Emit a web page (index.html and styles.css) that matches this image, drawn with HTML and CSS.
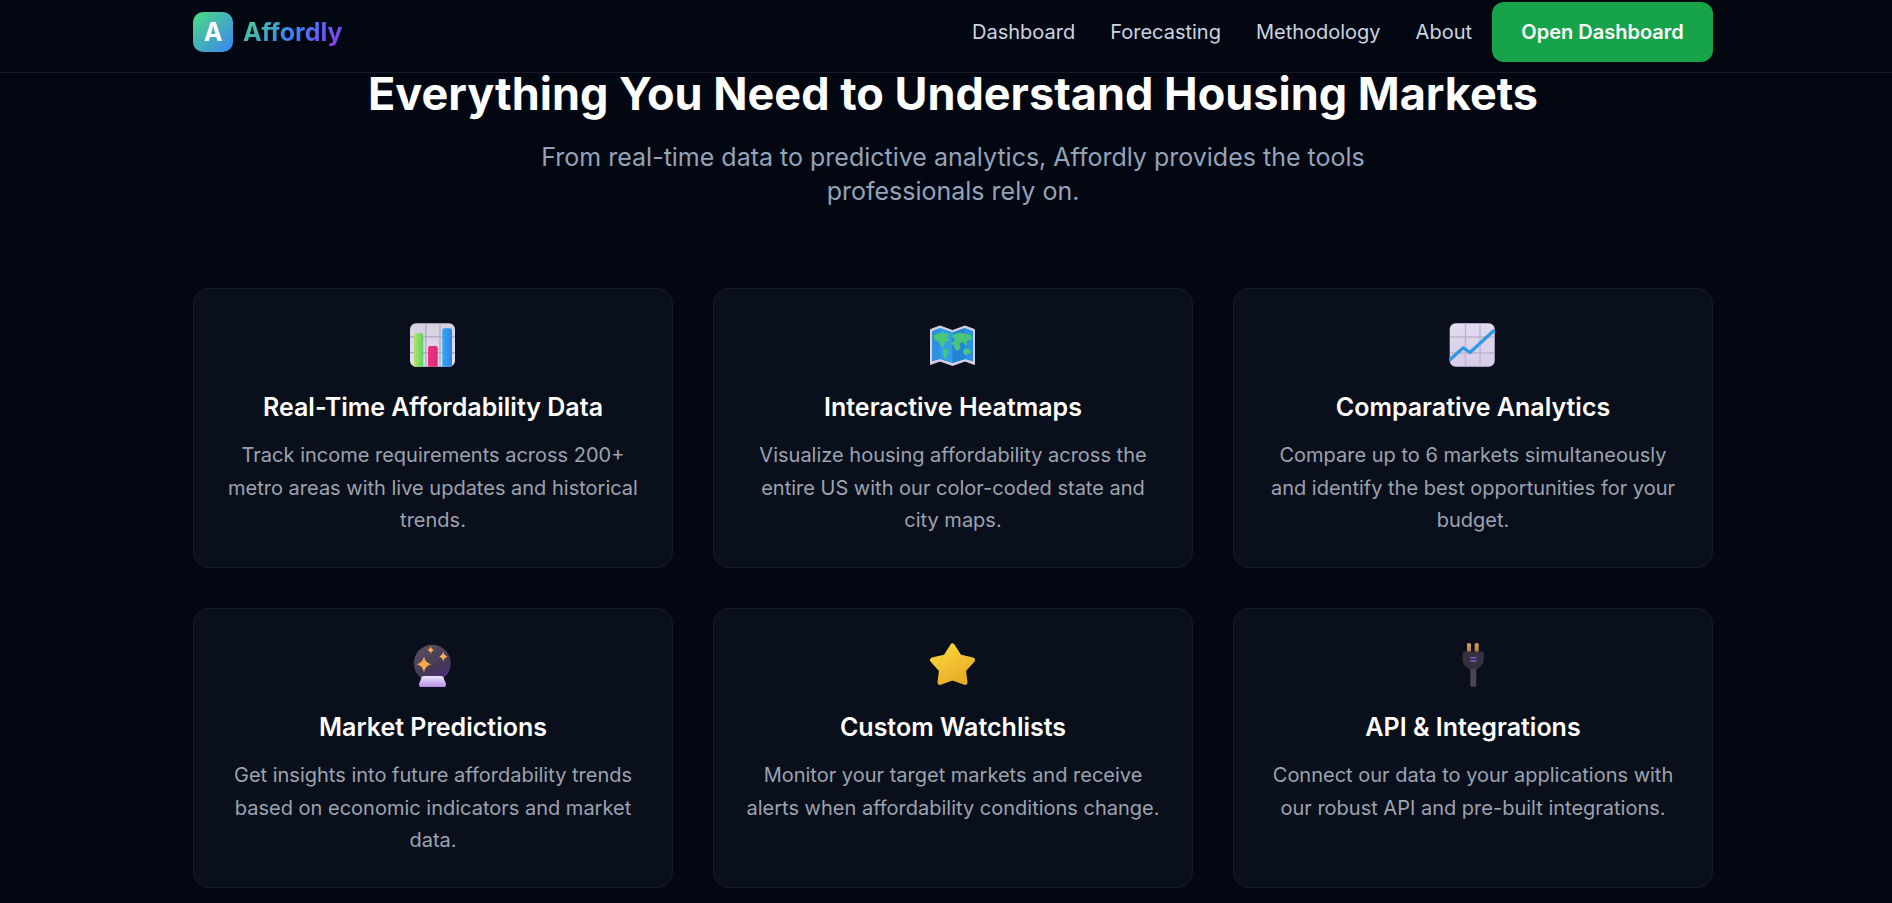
FILE: index.html
```html
<!DOCTYPE html>
<html lang="en">
<head>
<meta charset="utf-8">
<title>Affordly</title>
<link rel="stylesheet" href="styles.css">
</head>
<body>
<header class="topbar">
  <div class="topbar-inner">
    <a class="brand" href="#"><span class="brand-mark">A</span><span class="brand-name">Affordly</span></a>
    <nav class="nav">
      <a href="#">Dashboard</a>
      <a href="#">Forecasting</a>
      <a href="#">Methodology</a>
      <a href="#">About</a>
      <a class="cta" href="#">Open Dashboard</a>
    </nav>
  </div>
</header>
<main class="features">
  <div class="intro">
    <h2>Everything You Need to Understand Housing Markets</h2>
    <p>From real-time data to predictive analytics, Affordly provides the tools professionals rely on.</p>
  </div>
  <div class="grid">
    <article class="card">
      <svg class="icon" viewBox="0 0 48 48" aria-hidden="true">
        <defs>
          <linearGradient id="bg1" x1="0" y1="0" x2="0" y2="1"><stop offset="0" stop-color="#d6d0e2"/><stop offset="1" stop-color="#e4deee"/></linearGradient>
          <linearGradient id="gr1" x1="0" y1="0" x2="1" y2="0"><stop offset="0" stop-color="#b0e85c"/><stop offset="1" stop-color="#58d06c"/></linearGradient>
          <linearGradient id="pk1" x1="0" y1="0" x2="1" y2="0"><stop offset="0" stop-color="#f2347e"/><stop offset="1" stop-color="#d42c7c"/></linearGradient>
          <linearGradient id="bl1" x1="0" y1="0" x2="1" y2="0"><stop offset="0" stop-color="#2cabf6"/><stop offset="1" stop-color="#3580de"/></linearGradient>
        </defs>
        <rect x="1" y="2.3" width="45" height="43.4" rx="6" fill="url(#bg1)"/>
        <path d="M1 15.7H46M1 31.7H46M16.7 2.3V45.7M31 2.3V45.7" stroke="#b4aec0" stroke-width="1.4" fill="none"/>
        <path d="M5 45.700V14.300a2 2 0 0 1 2-2h5.300a2 2 0 0 1 2 2V45.700Z" fill="url(#gr1)"/>
        <path d="M19 45.700V27a2 2 0 0 1 2-2h5.700a2 2 0 0 1 2 2V45.700Z" fill="url(#pk1)"/>
        <path d="M33.300 45.700V9.300a2 2 0 0 1 2-2H41a2 2 0 0 1 2 2V45.700Z" fill="url(#bl1)"/>
      </svg>
      <h3>Real-Time Affordability Data</h3>
      <p>Track income requirements across 200+ metro areas with live updates and historical trends.</p>
    </article>
    <article class="card">
      <svg class="icon" viewBox="0 0 48 48" aria-hidden="true">
        <path d="M1.500 8.500 11 5 23.500 9.500 36 5 45.500 8.500V43.500L36 40 23.500 44.500 11 40 1.500 43.500Z" fill="#d8cfe2" stroke="#d8cfe2" stroke-linejoin="round"/>
        <path d="M3 10 11 7 23.500 11.500 36 7 44 10V40.500L36 38 23.500 42 11 38 3 40.500Z" fill="#2b92e0"/>
        <path d="M11 7V38L23.500 42V11.500Z" fill="#2f9fe8"/>
        <path d="M36 7V38L23.500 42V11.500Z" fill="#2384d4"/>
        <path d="M5 14 12 11.500 20 13 19 17 21 20 16 20.500 15 25 12.500 26 10 21 5 18.500ZM14 27 19.500 28.500 18.500 34 15.500 38 14 32Z" fill="#4cc47c"/>
        <path d="M23 14 31 11.500 42 14 43 18 38 20 37 25 33.500 21 30.500 22.500 31.500 28 27 30 25 25 22 22.500 26 19 24 17ZM35 28 40 27.500 42 32 36.500 34 34 32Z" fill="#4cc47c"/>
      </svg>
      <h3>Interactive Heatmaps</h3>
      <p>Visualize housing affordability across the entire US with our color-coded state and city maps.</p>
    </article>
    <article class="card">
      <svg class="icon" viewBox="0 0 48 48" aria-hidden="true">
        <defs>
          <linearGradient id="bg2" x1="0" y1="0" x2="0" y2="1"><stop offset="0" stop-color="#e2dbf0"/><stop offset="1" stop-color="#d8cce8"/></linearGradient>
        </defs>
        <rect x="0.700" y="2.300" width="45" height="43.400" rx="6" fill="url(#bg2)"/>
        <path d="M1 16H45.500M1 32H45.500M16.500 2.300V45.700M31 2.300V45.700" stroke="#bdb6c8" stroke-width="1.400" fill="none"/>
        <path d="M0 39.500 14.300 26.800 21 31.500 45.500 9" stroke="#2a9ae6" stroke-width="3.200" fill="none" stroke-linejoin="round"/>
      </svg>
      <h3>Comparative Analytics</h3>
      <p>Compare up to 6 markets simultaneously and identify the best opportunities for your budget.</p>
    </article>
    <article class="card">
      <svg class="icon" viewBox="0 0 48 48" aria-hidden="true">
        <defs>
          <linearGradient id="orb" x1="0.2" y1="0" x2="0.7" y2="1"><stop offset="0" stop-color="#5a5062"/><stop offset="0.6" stop-color="#443a52"/><stop offset="1" stop-color="#4d2c80"/></linearGradient>
          <linearGradient id="base" x1="0" y1="0" x2="0" y2="1"><stop offset="0" stop-color="#efe8f6"/><stop offset="1" stop-color="#b48ee6"/></linearGradient>
        </defs>
        <circle cx="23.300" cy="22.300" r="18.500" fill="url(#orb)"/>
        <path d="M12 38c0-2 1.500-3 3-3h17c1.500 0 3 1 3 3l2 5c.4 1.500-.6 3-2 3H12c-1.400 0-2.400-1.500-2-3Z" fill="url(#base)"/>
        <path d="M15 15.500C16.500 20.500 17.500 21.500 22.500 23.300 17.500 25 16.500 26 15 31.500 13.500 26 12.500 25 7.500 23.300 12.500 21.500 13.500 20.500 15 15.500Z" fill="#f8a84c"/>
        <path d="M34.300 10.500C35 13.500 35.500 14 38.500 15.500 35.500 17 35 17.500 34.300 20.500 33.600 17.500 33.100 17 30.100 15.500 33.100 14 33.600 13.500 34.300 10.500Z" fill="#f8b050"/>
        <path d="M21.700 5C22.300 7.500 22.700 8 25 9 22.700 10 22.300 10.500 21.700 13 21.100 10.500 20.700 10 18.400 9 20.700 8 21.100 7.500 21.700 5Z" fill="#f8b050"/>
      </svg>
      <h3>Market Predictions</h3>
      <p>Get insights into future affordability trends based on economic indicators and market data.</p>
    </article>
    <article class="card">
      <svg class="icon" viewBox="0 0 48 48" aria-hidden="true">
        <defs>
          <linearGradient id="star" x1="0" y1="0" x2="0.6" y2="1"><stop offset="0" stop-color="#fcd93f"/><stop offset="1" stop-color="#e9ad28"/></linearGradient>
        </defs>
        <path d="M23.500 5 30.500 16 43.500 19 34.500 29 36 41.500 23.500 37 11 41.500 12.500 29 3.500 19 16.500 16Z" fill="url(#star)" stroke="url(#star)" stroke-width="5" stroke-linejoin="round"/>
      </svg>
      <h3>Custom Watchlists</h3>
      <p>Monitor your target markets and receive alerts when affordability conditions change.</p>
    </article>
    <article class="card">
      <svg class="icon" viewBox="0 0 48 48" aria-hidden="true">
        <defs>
          <linearGradient id="prong" x1="0" y1="0" x2="0" y2="1"><stop offset="0" stop-color="#d9a055"/><stop offset="1" stop-color="#a87a44"/></linearGradient>
        </defs>
        <rect x="18" y="2.300" width="4" height="9.500" rx="1" fill="url(#prong)"/>
        <rect x="25.700" y="2.300" width="4" height="9.500" rx="1" fill="url(#prong)"/>
        <rect x="21.300" y="25" width="6" height="20.700" rx="1" fill="#4b4550"/>
        <path d="M13.700 12.500a2 2 0 0 1 2-2h17a2 2 0 0 1 2 2v7c0 3-3 6-6 8.500h-9c-3-2.500-6-5.500-6-8.500Z" fill="#37313f"/>
        <path d="M21.300 16.700H27.300M21.300 20H27.300" stroke="#7b5fd6" stroke-width="1.600" fill="none"/>
      </svg>
      <h3>API &amp; Integrations</h3>
      <p>Connect our data to your applications with our robust API and pre-built integrations.</p>
    </article>
  </div>
</main>
</body>
</html>
```
FILE: styles.css
```css
* { box-sizing: border-box; }
html, body { margin: 0; padding: 0; }
body {
  background: #030712;
  color: #fff;
  font-family: Inter, "Liberation Sans", sans-serif;
  height: 903px;
  overflow: hidden;
}
a { text-decoration: none; color: inherit; }
.topbar {
  height: 73px;
  border-bottom: 1px solid #171b26;
}
.topbar-inner {
  width: 1520px;
  height: 72px;
  margin-left: 193px;
  display: flex;
  align-items: center;
  justify-content: space-between;
  padding-bottom: 8px;
}
.brand { display: flex; align-items: center; gap: 10px; }
.brand-mark {
  width: 40px;
  height: 40px;
  border-radius: 10px;
  background: linear-gradient(135deg, #4ade80, #3b82f6);
  display: flex;
  align-items: center;
  justify-content: center;
  font-size: 25px;
  font-weight: 700;
}
.brand-name {
  font-size: 25px;
  font-weight: 700;
  background: linear-gradient(135deg, #4ade80, #3b82f6 50%, #9333ea);
  -webkit-background-clip: text;
  background-clip: text;
  color: transparent;
}
.nav { display: flex; align-items: center; gap: 35px; font-size: 20px; font-weight: 400; color: #cbd5e1; }
.cta {
  margin-left: -15px;
  height: 60px;
  width: 221px;
  display: flex;
  align-items: center;
  justify-content: center;
  border-radius: 12px;
  background: #16a34a;
  color: #fff;
  font-size: 20px;
  font-weight: 600;
}
.features { width: 1520px; margin-left: 193px; }
.intro { text-align: center; margin-bottom: 80px; }
.intro h2 { margin: -9px 0 0; font-size: 45px; font-weight: 700; line-height: 60px; }
.intro p {
  width: 896px;
  margin: 16px auto 0;
  font-size: 25px;
  line-height: 34px;
  color: #94a3b8;
}
.grid { display: grid; grid-template-columns: repeat(3, 480px); gap: 40px; }
.card {
  height: 280px;
  padding: 32px;
  border: 1px solid #171c29;
  border-radius: 16px;
  background: #0a0f1c;
  text-align: center;
}
.icon { display: block; width: 48px; height: 48px; margin: 0 auto 21.5px; }
.card h3 { margin: 0 0 16px; font-size: 25px; line-height: 32.5px; font-weight: 600; }
.card p { margin: 0; font-size: 20px; line-height: 32.6px; color: #9ca3af; }
```
